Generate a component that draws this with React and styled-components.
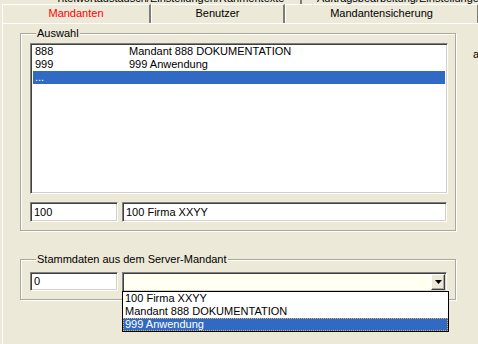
import React from 'react';
import styled, { createGlobalStyle } from 'styled-components';

const GlobalStyle = createGlobalStyle`
  html, body {
    margin: 0;
    padding: 0;
    background: #ECE9D8;
    overflow: hidden;
  }
  body {
    font-family: "Liberation Sans", Arial, sans-serif;
    font-size: 11px;
    color: #000;
  }
`;

const Window = styled.div`
  width: 478px;
  height: 344px;
  overflow: hidden;
  padding-left: 2px;
  box-sizing: border-box;
`;

const BackTabRow = styled.div`
  display: flex;
  align-items: flex-end;
  height: 4px;
  overflow: hidden;
  padding-left: 38px;
`;

const BackTab = styled.div`
  flex: none;
  width: ${({ width }) => width}px;
  height: 13px;
  line-height: 13px;
  margin-bottom: -1px;
  text-align: center;
  white-space: nowrap;
  overflow: hidden;
  border-right: 2px solid #7F7D72;
  box-sizing: border-box;
`;

const TabRow = styled.div`
  display: flex;
  height: 19px;
`;

const Tab = styled.div`
  flex: none;
  width: ${({ width }) => width}px;
  box-sizing: border-box;
  border-top: 1px solid #fff;
  border-left: 1px solid #fff;
  border-right: 2px solid #807E74;
  line-height: 17px;
  text-align: center;
  white-space: nowrap;
  color: ${({ active }) => (active ? '#FF0000' : '#000')};
`;

const Panel = styled.div`
  display: flex;
  border-top: 1px solid #fff;
  border-left: 1px solid #fff;
  height: 320px;
`;

const Column = styled.div`
  flex: none;
  width: 436px;
  margin-left: 17px;
`;

const SideLabel = styled.div`
  padding: 24px 0 0 17px;
  white-space: nowrap;
`;

const Group = styled.fieldset`
  margin: ${({ top }) => top}px 0 0 0;
  padding: ${({ pad }) => pad};
  border: 1px solid #ACA899;
  box-shadow: 1px 1px 0 #fff, inset 1px 1px 0 #fff;
  min-width: 0;
  box-sizing: border-box;
  width: 436px;
`;

const Legend = styled.legend`
  padding: 0 1px;
  margin-left: 6px;
  line-height: 13px;
  background: #ECE9D8;
`;

const sunken = `
  border-style: solid;
  border-width: 1px;
  border-color: #808080 #fff #fff #808080;
  box-shadow: inset 1px 1px 0 #404040, inset -1px -1px 0 #D4D0C8;
`;

const ListBox = styled.div`
  ${sunken}
  width: 418px;
  height: 151px;
  box-sizing: border-box;
  background: #fff;
  padding: 1px 2px;
`;

const ListRow = styled.div`
  display: flex;
  height: 13px;
  line-height: 13px;
  padding-left: 2px;
  background: ${({ selected }) => (selected ? '#316AC5' : 'transparent')};
  color: ${({ selected }) => (selected ? '#fff' : '#000')};
`;

const Code = styled.span`
  width: 94px;
  flex: none;
`;

const FieldRow = styled.div`
  display: flex;
  gap: 4px;
  margin-top: ${({ top }) => top || 0}px;
`;

const Field = styled.div`
  ${sunken}
  flex: none;
  width: ${({ width }) => width}px;
  height: ${({ height }) => height}px;
  box-sizing: border-box;
  background: ${({ tint }) => tint || '#fff'};
  line-height: ${({ height }) => height - 2}px;
  padding-left: 3px;
  white-space: nowrap;
`;

const Combo = styled(Field)`
  position: relative;
  display: flex;
  justify-content: flex-end;
  align-items: center;
  padding: 0 1px 0 3px;
`;

const DropButton = styled.div`
  width: 14px;
  height: 16px;
  box-sizing: border-box;
  background: #ECE9D8;
  border-style: solid;
  border-width: 1px;
  border-color: #fff #404040 #404040 #fff;
  box-shadow: inset -1px -1px 0 #ACA899;
  display: flex;
  align-items: center;
  justify-content: center;
`;

const DropList = styled.div`
  position: absolute;
  top: 100%;
  left: -1px;
  width: 327px;
  box-sizing: border-box;
  border: 1px solid #000;
  background: #fff;
  z-index: 2;
`;

const DropItem = styled.div`
  height: 13px;
  line-height: 13px;
  padding-left: 2px;
  background: ${({ selected }) => (selected ? '#316AC5' : '#fff')};
  color: ${({ selected }) => (selected ? '#fff' : '#000')};
  outline: ${({ selected }) => (selected ? '1px dotted #E8B040' : 'none')};
  outline-offset: -1px;
`;

const mandanten = [
  { code: '888', name: 'Mandant 888 DOKUMENTATION' },
  { code: '999', name: '999 Anwendung' },
  { code: '...', name: '', selected: true },
];

const serverOptions = [
  { label: '100 Firma XXYY' },
  { label: 'Mandant 888 DOKUMENTATION' },
  { label: '999 Anwendung', selected: true },
];

function App() {
  return (
    <>
      <GlobalStyle />
      <Window>
        <BackTabRow>
          <BackTab width={262}>Titelwortaustausch/Einstellungen/Rahmentexte</BackTab>
          <BackTab width={200}>Auftragsbearbeitung/Einstellungen</BackTab>
        </BackTabRow>
        <TabRow>
          <Tab width={149} active>Mandanten</Tab>
          <Tab width={134}>Benutzer</Tab>
          <Tab width={194}>Mandantensicherung</Tab>
        </TabRow>
        <Panel>
          <Column>
            <Group top={3} pad="3px 8px 8px 9px">
              <Legend>Auswahl</Legend>
              <ListBox>
                {mandanten.map((m) => (
                  <ListRow key={m.code} selected={m.selected}>
                    <Code>{m.code}</Code>
                    <span>{m.name}</span>
                  </ListRow>
                ))}
              </ListBox>
              <FieldRow top={8}>
                <Field width={88} height={20}>100</Field>
                <Field width={325} height={20}>100 Firma XXYY</Field>
              </FieldRow>
            </Group>
            <Group top={22} pad="6px 8px 7px 9px">
              <Legend>Stammdaten aus dem Server-Mandant</Legend>
              <FieldRow>
                <Field width={88} height={19}>0</Field>
                <Combo width={325} height={20} tint="#FFFFF2">
                  <DropButton>
                    <svg width="7" height="4" viewBox="0 0 7 4">
                      <path d="M0 0h7L3.5 4z" fill="#000" />
                    </svg>
                  </DropButton>
                  <DropList>
                    {serverOptions.map((o) => (
                      <DropItem key={o.label} selected={o.selected}>{o.label}</DropItem>
                    ))}
                  </DropList>
                </Combo>
              </FieldRow>
            </Group>
          </Column>
          <SideLabel>a</SideLabel>
        </Panel>
      </Window>
    </>
  );
}

export default App;
